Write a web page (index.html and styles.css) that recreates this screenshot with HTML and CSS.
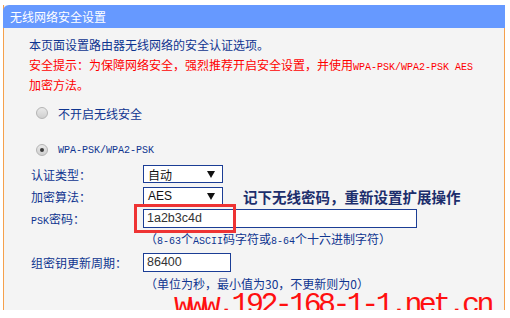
FILE: index.html
```html
<!DOCTYPE html>
<html lang="zh-CN">
<head>
    <meta charset="UTF-8">
    <title>无线网络安全设置</title>
    <link rel="stylesheet" href="styles.css">
</head>
<body>
    <div class="panel">
        <div class="head">无线网络安全设置</div>

        <div class="content">
            <p class="line">本页面设置路由器无线网络的安全认证选项。</p>
            <p class="line warn">安全提示：为保障网络安全，强烈推荐开启安全设置，并使用<span class="en">WPA-PSK/WPA2-PSK AES</span></p>
            <p class="line warn">加密方法。</p>

            <div class="radio-row first">
                <span class="radio"></span>
                <span>不开启无线安全</span>
            </div>
            <div class="radio-row second">
                <span class="radio checked"></span>
                <span class="en">WPA-PSK/WPA2-PSK</span>
            </div>

            <div class="form">
                <div class="frow">
                    <span class="label">认证类型：</span>
                    <div class="select"><span>自动</span><i class="arrow"></i></div>
                </div>
                <div class="frow">
                    <span class="label">加密算法：</span>
                    <div class="select"><span class="latin">AES</span><i class="arrow"></i></div>
                    <b class="note">记下无线密码，重新设置扩展操作</b>
                </div>
                <div class="frow">
                    <span class="label"><span class="en">PSK</span>密码：</span>
                    <div class="mark-wrap">
                        <div class="input wide">1a2b3c4d</div>
                        <div class="mark"></div>
                    </div>
                </div>
                <div class="frow">
                    <span></span>
                    <span class="hint">（<span class="en">8-63</span>个<span class="en">ASCII</span>码字符或<span class="en">8-64</span>个十六进制字符）</span>
                </div>
                <div class="frow">
                    <span class="label">组密钥更新周期：</span>
                    <div class="input short">86400</div>
                </div>
                <div class="frow">
                    <span></span>
                    <span class="hint">（单位为秒，最小值为30，不更新则为0）</span>
                </div>
            </div>
        </div>

        <div class="watermark">www.192-168-1-1.net.cn</div>
    </div>
</body>
</html>
```

FILE: styles.css
```css
body {
    margin: 0;
    padding: 5px 5px 0 3px;
    background-color: #ffffff;
    font-family: "Noto Sans CJK SC", "Liberation Sans", sans-serif;
    font-size: 12px;
    color: #0f3590;
}
.panel {
    position: relative;
    height: 305px;
    background-color: #f4f4f4;
    border-left: 1px solid #f5a04c;
    border-right: 1px solid #f5a04c;
}
.head {
    height: 23px;
    line-height: 23px;
    margin: 0 -1px;
    padding-left: 7px;
    background-color: #6699ff;
    color: #ffffff;
    font-size: 12px;
    border-radius: 6px 0 0 0;
}
.content {
    padding-left: 25px;
}
.line {
    margin: 0;
    height: 20px;
    line-height: 20px;
}
.line:first-child {
    margin-top: 7px;
}
.warn {
    color: #ff0000;
}
.en {
    font-family: "Liberation Mono", monospace;
    font-size: 10px;
}
.radio-row {
    display: flex;
    align-items: center;
    gap: 10px;
    height: 20px;
    padding-left: 7px;
}
.radio-row.first {
    margin-top: 8px;
}
.radio-row.second {
    margin-top: 17px;
}
.radio {
    box-sizing: border-box;
    width: 12px;
    height: 12px;
    border-radius: 50%;
    border: 1px solid #b4b4b4;
    background: linear-gradient(#e9e9e9, #cfcfcf);
    display: flex;
    align-items: center;
    justify-content: center;
}
.radio.checked::after {
    content: "";
    width: 4px;
    height: 4px;
    border-radius: 50%;
    background-color: #3a3a3a;
}
.form {
    margin-top: 3px;
    padding-left: 2px;
}
.frow {
    display: grid;
    grid-template-columns: 112px auto 1fr;
    align-items: center;
    height: 22px;
}
.select {
    box-sizing: border-box;
    width: 80px;
    height: 18px;
    border: 1px solid #1b3d95;
    background-color: #ffffff;
    color: #111111;
    display: flex;
    align-items: center;
    justify-content: space-between;
    padding: 0 7px 0 4px;
}
.latin {
    font-family: "Liberation Sans", sans-serif;
    font-size: 12px;
}
.arrow {
    width: 0;
    height: 0;
    border-left: 4px solid transparent;
    border-right: 4px solid transparent;
    border-top: 7px solid #111111;
}
.note {
    margin-left: 20px;
    font-size: 14.5px;
    color: #1c2e6c;
}
.input {
    box-sizing: border-box;
    height: 19px;
    line-height: 17px;
    border: 1px solid #1b3d95;
    background-color: #ffffff;
    padding-left: 3px;
    font-family: "Liberation Sans", sans-serif;
    font-size: 12.5px;
    color: #333333;
}
.wide {
    width: 274px;
}
.short {
    width: 88px;
}
.mark-wrap {
    position: relative;
}
.mark {
    position: absolute;
    left: -9px;
    top: -5px;
    width: 102px;
    height: 29px;
    box-sizing: border-box;
    border: 3px solid #ee3333;
}
.hint {
    grid-column: 2 / 4;
    margin-left: 2px;
    line-height: 14px;
}
.watermark {
    position: absolute;
    left: 170px;
    top: 286px;
    font-family: "Liberation Mono", monospace;
    font-size: 30px;
    letter-spacing: -3.6px;
    color: #ff1010;
    line-height: 28px;
    white-space: nowrap;
}
```
